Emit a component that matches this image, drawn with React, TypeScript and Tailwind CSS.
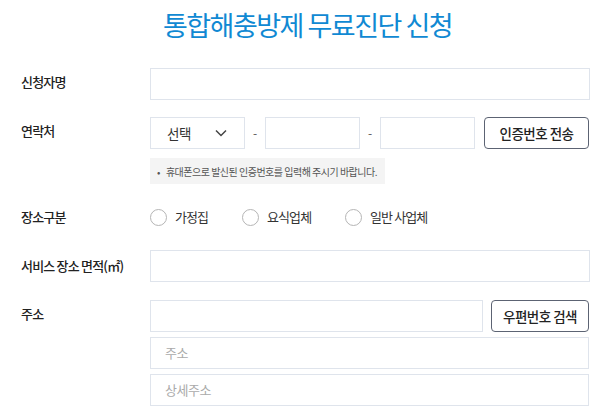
import React from "react";

const font = { fontFamily: '"Noto Sans CJK KR", "Noto Sans", sans-serif' };

function Label({ children }: { children: React.ReactNode }) {
  return (
    <div className="w-[150px] shrink-0 pl-[21px] text-[13px] font-medium leading-[28px] tracking-[-0.8px] text-[#222]">
      {children}
    </div>
  );
}

function Field({ className = "", placeholder }: { className?: string; placeholder?: string }) {
  return (
    <div
      className={`h-[32px] border border-[#dfe4ec] bg-white px-[14px] text-[13px] leading-[30px] tracking-[-0.5px] text-[#aaa] ${className}`}
    >
      {placeholder}
    </div>
  );
}

function Radio({ label, className = "" }: { label: string; className?: string }) {
  return (
    <label className={`flex items-center gap-[8px] ${className}`}>
      <span className="h-[17px] w-[17px] rounded-full border border-[#b5b5b5] bg-white" />
      <span className="text-[13px] tracking-[-0.9px] text-[#333]">{label}</span>
    </label>
  );
}

export default function App() {
  return (
    <div className="h-[419px] w-[615px] bg-white" style={font}>
      <h1 className="pt-[6px] text-center text-[27px] font-normal leading-[38px] tracking-[-1.5px] text-[#1089d3]">
        통합해충방제 무료진단 신청
      </h1>

      <div className="mt-[24px] flex flex-col">
        {/* 신청자명 */}
        <div className="flex">
          <Label>신청자명</Label>
          <Field className="w-[440px]" />
        </div>

        {/* 연락처 */}
        <div className="mt-[17px] flex">
          <Label>연락처</Label>
          <div className="flex flex-col">
            <div className="flex items-center">
              <div className="flex h-[32px] w-[95px] items-center justify-between border border-[#dfe4ec] pl-[16px] pr-[17px] text-[13.5px] tracking-[-0.5px] text-[#333]">
                <span>선택</span>
                <svg width="12" height="8" viewBox="0 0 12 8" fill="none">
                  <path d="M1 1.5l5 5 5-5" stroke="#444" strokeWidth="1.5" />
                </svg>
              </div>
              <span className="w-[20px] text-center text-[12px] text-[#555]">-</span>
              <Field className="w-[95px]" />
              <span className="w-[20px] text-center text-[12px] text-[#555]">-</span>
              <Field className="w-[95px]" />
              <button className="ml-[9px] h-[32px] w-[105px] rounded-[4px] border border-[#5c6373] text-[13.5px] font-medium tracking-[-0.5px] text-[#222]">
                인증번호 전송
              </button>
            </div>
            <div className="mt-[9px] flex h-[26px] w-fit items-center whitespace-nowrap bg-[#f4f4f4] pl-[7px] pr-[8px] text-[10px] tracking-[-0.5px] text-[#555]">
              <span className="mr-[6px]">•</span>
              휴대폰으로 발신된 인증번호를 입력해 주시기 바랍니다.
            </div>
          </div>
        </div>

        {/* 장소구분 */}
        <div className="mt-[17px] flex items-center">
          <Label>장소구분</Label>
          <div className="flex h-[32px] items-center">
            <Radio label="가정집" className="w-[92px]" />
            <Radio label="요식업체" className="w-[103px]" />
            <Radio label="일반 사업체" />
          </div>
        </div>

        {/* 면적 */}
        <div className="mt-[17px] flex items-center">
          <Label>서비스 장소 면적(㎡)</Label>
          <Field className="w-[440px]" />
        </div>

        {/* 주소 */}
        <div className="mt-[18px] flex">
          <Label>주소</Label>
          <div className="flex w-[439px] flex-col gap-[5px]">
            <div className="flex gap-[8px]">
              <Field className="flex-1" />
              <button className="h-[32px] w-[98px] rounded-[4px] border border-[#5c6373] text-[13.5px] font-medium tracking-[-0.5px] text-[#222]">
                우편번호 검색
              </button>
            </div>
            <Field placeholder="주소" />
            <Field placeholder="상세주소" />
          </div>
        </div>
      </div>
    </div>
  );
}
